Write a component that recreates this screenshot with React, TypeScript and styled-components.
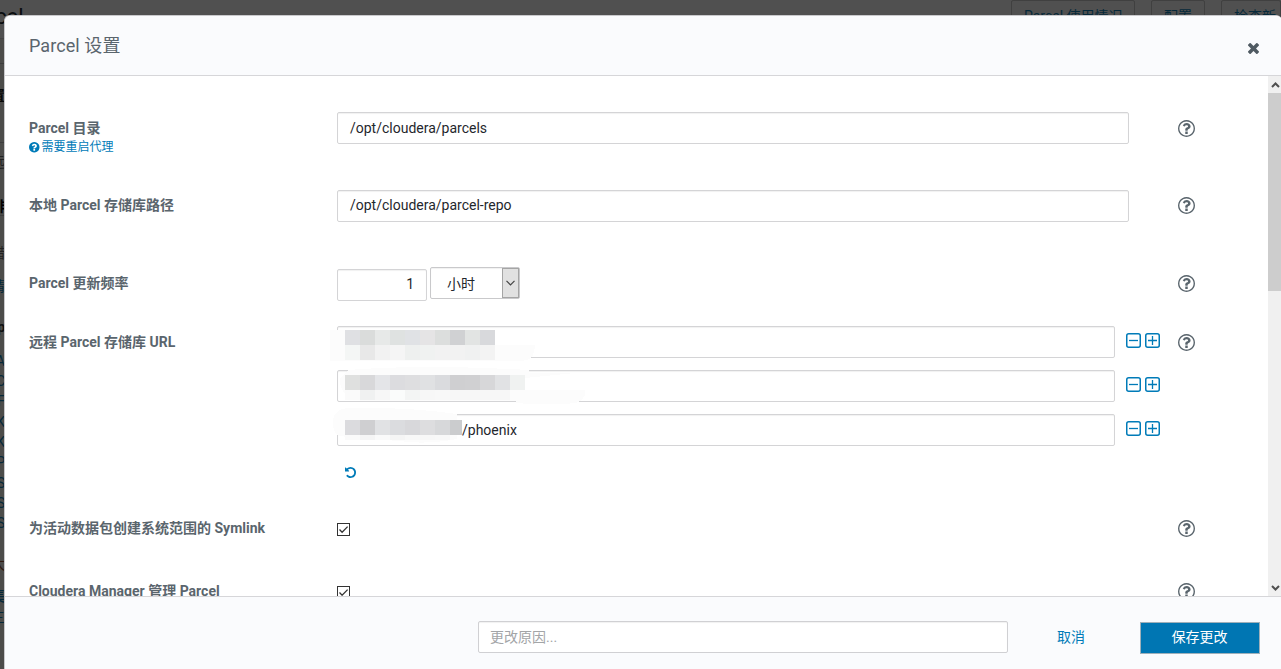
import React from "react";
import styled, { createGlobalStyle } from "styled-components";

const FONT = `Roboto, "Noto Sans CJK SC", sans-serif`;
const BLUE = "#007bb8";
const GREY = "#5a656d";

const Global = createGlobalStyle`
  * { box-sizing: border-box; }
  html, body { margin: 0; height: 100%; overflow: hidden; }
  body { font-family: ${FONT}; font-size: 14px; color: #1f272d; }
  button, input { font-family: inherit; }
`;

const Page = styled.div`
  position: relative;
  width: 1281px;
  height: 669px;
  overflow: hidden;
  background: #505050;
`;

/* dimmed page under the dialog */
const PageHeader = styled.div`
  display: flex;
  justify-content: flex-end;
  gap: 16px;
  height: 39px;
  border-bottom: 1px solid #454545;
`;
const PageTitle = styled.div`
  margin: 4px auto 0 -5px;
  font-size: 22px;
  line-height: 26px;
  color: #0a0d0f;
`;
const PageButton = styled.div<{ $w: number }>`
  flex: none;
  width: ${(p) => p.$w}px;
  height: 32px;
  padding-left: 12px;
  border: 1px solid #404040;
  border-radius: 2px;
  line-height: 30px;
  color: #06293a;
  white-space: nowrap;
`;
const PageBody = styled.div`
  display: flex;
  flex-direction: column;
  width: 5px;
  height: 630px;
  background: #4c4c4a;
`;
const PageLine = styled.div<{ $gap: number; $tone?: string; $bold?: boolean; $rule?: boolean }>`
  flex: none;
  display: flex;
  justify-content: flex-end;
  width: 5px;
  height: 20px;
  margin-top: ${(p) => p.$gap}px;
  border-bottom: ${(p) => (p.$rule ? "1px solid #3d3d3d" : "0")};
  line-height: 20px;
  font-weight: ${(p) => (p.$bold ? 700 : 400)};
  color: ${(p) => p.$tone || "#06293a"};
`;

const Dialog = styled.div`
  position: absolute;
  left: 4px;
  top: 15px;
  width: 1278px;
  height: 654px;
  display: flex;
  flex-direction: column;
  border: 1px solid #c9c9cc;
  border-right: 0;
  border-bottom: 0;
  border-radius: 6px 6px 0 0;
  background: #fff;
  overflow: hidden;
`;
const Header = styled.header`
  flex: none;
  display: flex;
  align-items: center;
  justify-content: space-between;
  height: 60px;
  padding: 0 23px 0 24px;
  border-bottom: 1px solid #d6d6d9;
  background: #fafbfd;
`;
const Title = styled.h1`
  margin: 0;
  font-size: 18px;
  font-weight: 400;
  line-height: 24px;
  letter-spacing: 0.08px;
  color: ${GREY};
`;
const CloseButton = styled.button`
  display: flex;
  padding: 0;
  margin-top: 6px;
  border: 0;
  background: none;
  color: #4f5a62;
`;
const Middle = styled.div`
  flex: none;
  display: flex;
  height: 520px;
`;
const Form = styled.div`
  flex: none;
  width: 1263px;
  padding: 36px 0 0 24px;
  overflow: hidden;
`;
const ScrollTrack = styled.div`
  flex: 1;
  display: flex;
  flex-direction: column;
  background: #f0f0f0;
`;
const ScrollArrow = styled.div`
  display: flex;
  justify-content: center;
  align-items: center;
  height: 17px;
`;
const ScrollThumb = styled.div`
  height: 198px;
  margin-bottom: auto;
  background: #cdcdcd;
`;

const Row = styled.div<{ $h: number }>`
  display: flex;
  height: ${(p) => p.$h}px;
`;
const LabelCell = styled.div<{ $lift?: boolean }>`
  flex: none;
  width: 308px;
  padding-top: ${(p) => (p.$lift ? 5 : 6)}px;
`;
const Label = styled.div`
  font-weight: 700;
  line-height: 20px;
  color: ${GREY};
`;
const Note = styled.div`
  display: flex;
  align-items: center;
  gap: 2px;
  font-size: 12px;
  line-height: 19px;
  color: ${BLUE};
`;
const Field = styled.div`
  flex: none;
  width: 841px;
`;
const HelpCell = styled.div<{ $lift?: boolean }>`
  padding-top: ${(p) => (p.$lift ? 7 : 8)}px;
  color: ${GREY};
`;
const Box = styled.div<{ $w: number; $indent?: number; $end?: boolean; $lift?: boolean }>`
  flex: none;
  width: ${(p) => p.$w}px;
  height: 32px;
  padding: 0 12px 0 ${(p) => p.$indent || 12}px;
  border: 1px solid #d4d4d6;
  border-radius: 2px;
  background: #fff;
  box-shadow: inset 0 1px 1px rgba(0, 0, 0, 0.06);
  line-height: ${(p) => (p.$lift ? 28 : 30)}px;
  text-align: ${(p) => (p.$end ? "right" : "left")};
`;
const Frequency = styled.div`
  display: flex;
  gap: 3px;
`;
const NumberWrap = styled.div`
  padding-top: 2px;
`;
const Select = styled.div`
  display: flex;
  justify-content: space-between;
  width: 90px;
  height: 32px;
  border: 1px solid #c9c9cb;
  border-radius: 2px;
  padding-left: 16px;
  line-height: 32px;
  box-shadow: inset 0 1px 1px rgba(0, 0, 0, 0.06);
`;
const SelectArrow = styled.div`
  display: flex;
  align-items: center;
  justify-content: center;
  width: 17px;
  border: 1px solid #a5a5a5;
  background: #e1e1e1;
`;
const UrlList = styled.div`
  display: flex;
  flex-direction: column;
  gap: 12px;
`;
const UrlRow = styled.div`
  position: relative;
  display: flex;
  align-items: flex-start;
`;
const Actions = styled.div`
  display: flex;
  gap: 4px;
  padding: 7px 0 0 11px;
  color: ${BLUE};
`;
const Mask = styled.svg`
  position: absolute;
  left: -7px;
  top: -8px;
`;
const Undo = styled.div`
  display: flex;
  padding: 21px 0 0 8px;
  color: ${BLUE};
`;
const Check = styled.div`
  display: flex;
  align-items: center;
  justify-content: center;
  width: 13px;
  height: 13px;
  margin-top: 11px;
  border: 1px solid #333;
  background: #fff;
`;
const Footer = styled.footer`
  flex: 1;
  display: flex;
  align-items: flex-start;
  padding: 24px 0 0 473px;
  border-top: 1px solid #d6d6d9;
  background: #fafbfd;
`;
const Reason = styled.input`
  width: 530px;
  height: 32px;
  padding: 0 11px;
  border: 1px solid #d0d0d3;
  border-radius: 2px;
  background: #fff;
  font-size: 14px;
  box-shadow: inset 0 1px 1px rgba(0, 0, 0, 0.06);
  &::placeholder { color: #a3a5a7; opacity: 1; }
`;
const Cancel = styled.button`
  width: 132px;
  height: 32px;
  padding: 0 6px 2px 0;
  border: 0;
  background: none;
  font-size: 14px;
  color: ${BLUE};
`;
const Save = styled.button`
  width: 120px;
  height: 32px;
  margin-top: 1px;
  padding: 0 1px 4px 0;
  border: 1px solid #9fb0ba;
  background: #0076b3;
  font-size: 14px;
  color: #fff;
`;

const paths = {
  times:
    "M1490 1322q0 40-28 68l-136 136q-28 28-68 28t-68-28l-294-294-294 294q-28 28-68 28t-68-28l-136-136q-28-28-28-68t28-68l294-294-294-294q-28-28-28-68t28-68l136-136q28-28 68-28t68 28l294 294 294-294q28-28 68-28t68 28l136 136q28 28 28 68t-28 68l-294 294 294 294q28 28 28 68z",
  help:
    "M1024 1376v-192q0-14-9-23t-23-9h-192q-14 0-23 9t-9 23v192q0 14 9 23t23 9h192q14 0 23-9t9-23zm256-672q0-88-55.5-163t-138.5-116-170-41q-243 0-371 213-15 24 8 42l132 100q7 6 19 6 16 0 25-12 53-68 86-92 34-24 86-24 48 0 85.5 26t37.5 59q0 38-20 61t-68 45q-63 28-115.5 86.5t-52.5 125.5v36q0 14 9 23t23 9h192q14 0 23-9t9-23q0-19 21.5-49.5t54.5-49.5q32-18 49-28.5t46-35 44.5-48 28-60.5 12.5-81zm384 192q0 209-103 385.5t-279.5 279.5-385.5 103-385.5-103-279.5-279.5-103-385.5 103-385.5 279.5-279.5 385.5-103 385.5 103 279.5 279.5 103 385.5z",
  helpOutline:
    "M1008 1200v160q0 14-9 23t-23 9h-160q-14 0-23-9t-9-23v-160q0-14 9-23t23-9h160q14 0 23 9t9 23zm256-496q0 50-15 90t-45.5 69-52 44-59.5 36q-32 18-46.5 28t-26 24-11.5 29v32q0 14-9 23t-23 9h-160q-14 0-23-9t-9-23v-68q0-35 10.5-64.5t24-47.5 39-35.5 41-25.5 44.5-21q53-25 75-43t22-49q0-42-43.5-71.5t-95.5-29.5q-56 0-95 27-29 20-80 83-9 12-25 12-11 0-19-6l-108-82q-10-7-12-20t5-23q122-192 349-192 129 0 238.5 89.5t109.5 214.5zm-368-448q-130 0-248.5 51t-204 136.5-136.5 204-51 248.5 51 248.5 136.5 204 204 136.5 248.5 51 248.5-51 204-136.5 136.5-204 51-248.5-51-248.5-136.5-204-204-136.5-248.5-51zm768 640q0 209-103 385.5t-279.5 279.5-385.5 103-385.5-103-279.5-279.5-103-385.5 103-385.5 279.5-279.5 385.5-103 385.5 103 279.5 279.5 103 385.5z",
  undo:
    "M1664 896q0 156-61 298t-164 245-245 164-298 61q-172 0-327-72.5t-264-204.5q-7-10-6.5-22.5t8.5-20.5l137-138q10-9 25-9 16 2 23 12 73 95 179 147t225 52q104 0 198.5-40.5t163.5-109.5 109.5-163.5 40.5-198.5-40.5-198.5-109.5-163.5-163.5-109.5-198.5-40.5q-98 0-188 35.5t-160 101.5l137 138q31 30 14 69-17 40-59 40h-448q-26 0-45-19t-19-45v-448q0-42 40-59 39-17 69 14l130 129q107-101 244.5-156.5t284.5-55.5q156 0 298 61t245 164 164 245 61 298z",
};

/* glyphs share a 1792 grid; the view box is trimmed to the ink */
const Glyph = ({ name, size }: { name: keyof typeof paths; size: number }) => (
  <svg
    width={size}
    height={size}
    viewBox={name === "times" ? "302 366 1188 1188" : "128 128 1536 1536"}
    fill="currentColor"
    style={{ display: "block" }}
  >
    <path d={paths[name]} />
  </svg>
);

const SquareIcon = ({ plus }: { plus?: boolean }) => (
  <svg width="15" height="15" viewBox="0 0 15 15" fill="none" stroke="currentColor">
    <rect x="0.75" y="0.75" width="13.5" height="13.5" rx="2" strokeWidth="1.5" />
    <path d={plus ? "M3 7.5h9M7.5 3v9" : "M3 7.5h9"} strokeWidth="1.3" />
  </svg>
);

const Help = ({ lift }: { lift?: boolean }) => (
  <HelpCell $lift={lift}>
    <Glyph name="helpOutline" size={17} />
  </HelpCell>
);

const Checkbox = () => (
  <Check>
    <svg width="11" height="11" viewBox="0 0 11 11" fill="none" stroke="#333" strokeWidth="1.3">
      <path d="M1.5 5.5l2.6 2.7L9.6 2.6" />
    </svg>
  </Check>
);

type MaskData = { smear: string; top: number; cells: string[]; lower: string[]; last?: number; lowerH: number };

/* pixelated cover over the host part of each address */
const masks: MaskData[] = [
  {
    smear: "M0 12H165V27H205Q204 38 200 41L192 43H0Z",
    top: 12,
    cells: ["#dfe0e3", "#dadcdb", "#e7e9e8", "#dfe2e1", "#e0e2e5", "#e5e4e5", "#dcdedd", "#d0d1d3", "#e2e4e3", "#d8d9dc"],
    lower: ["#f4f6f5", "#e8e8e8", "#f2f2f2", "#f5f5f5", "#eef0ef", "#f0f2f1", "#f2f2f2", "#f2f2f2", "#f0f1f1", "#f3f3f3"],
    lowerH: 15,
  },
  {
    smear: "M18 8Q90 2 199 8V11H245L195 16V28H255Q256 38 246 41Q220 44 186 41V39L60 39H32Q8 34 10 16Z",
    top: 13,
    cells: ["#dfe0df", "#d8d8da", "#e4e5e8", "#dcdcdf", "#dedee0", "#e0e1e3", "#dadbde", "#cfcfd1", "#d0d0d2", "#d7d7d9", "#e1e2e4", "#f0f2f1"],
    lower: ["#fafafa", "#f0f1f1", "#f7f7f7", "#fafcfb", "#f3f5f4", "#f7f7f7", "#f8f8f8", "#f7f7f7", "#f7f7f7", "#f7f7f7", "#f7f7f7"],
    lowerH: 10,
  },
  {
    smear: "M20 2Q80 1 127 8V33Q100 38 80 36L8 30Q2 24 3 14Q5 2 20 2Z",
    top: 14,
    cells: ["#dbdbde", "#cfcfd1", "#e1e2e4", "#dbdcdf", "#d8d8db", "#dddddf", "#d7d8da", "#cbccce"],
    lower: ["#fafafa", "#f5f5f5", "#fafafa", "#f5f5f5", "#f8f8f8", "#f7f7f7", "#f8f8f8"],
    last: 12,
    lowerH: 5,
  },
];

const AddressMask = ({ data }: { data: MaskData }) => (
  <Mask width="260" height="46" viewBox="0 0 260 46" shapeRendering="crispEdges">
    <path d={data.smear} fill="#fcfcfc" />
    {data.cells.map((c, i) => (
      <rect key={i} x={15 + i * 15} y={data.top} width={i === 7 && data.last ? data.last : 15} height="15" fill={c} />
    ))}
    {data.lower.map((c, i) => (
      <rect key={i} x={15 + i * 15} y={data.top + 15} width="15" height={data.lowerH} fill={c} />
    ))}
  </Mask>
);

const backLines: { t: string; gap: number; tone?: string; bold?: boolean; rule?: boolean }[] = [
  { t: "", gap: 5, tone: "#000", rule: true },
  { t: "置", gap: 21, tone: "#080808", bold: true },
  { t: "", gap: 18, rule: true },
  { t: "远", gap: 9, tone: "#222" },
  { t: "排", gap: 24, tone: "#000", bold: true, rule: true },
  { t: "错", gap: 27, tone: "#222" },
  { t: "请", gap: 13 },
  { t: "p", gap: 21, tone: "#111", bold: true },
  { t: "A", gap: 14 },
  { t: "C", gap: 0 },
  { t: "F", gap: 0 },
  { t: "K", gap: 1 },
  { t: "K", gap: 0 },
  { t: "P", gap: 0 },
  { t: "S", gap: 1 },
  { t: "S", gap: 0 },
  { t: "S", gap: 0 },
  { t: "太", gap: 21, tone: "#301a10" },
  { t: "集", gap: 12, bold: true },
  { t: "三", gap: 1 },
];

export default function App() {
  return (
    <>
      <Global />
      <Page>
        <PageHeader>
          <PageTitle>cel</PageTitle>
          <PageButton $w={124}>Parcel 使用情况</PageButton>
          <PageButton $w={54}>配置</PageButton>
          <PageButton $w={60}>检查新</PageButton>
        </PageHeader>
        <PageBody>
          {backLines.map((l, i) => (
            <PageLine key={i} $gap={l.gap} $tone={l.tone} $bold={l.bold} $rule={l.rule}>
              {l.t}
            </PageLine>
          ))}
        </PageBody>

        <Dialog>
          <Header>
            <Title>Parcel 设置</Title>
            <CloseButton aria-label="关闭">
              <Glyph name="times" size={11} />
            </CloseButton>
          </Header>
          <Middle>
            <Form>
              <Row $h={78}>
                <LabelCell>
                  <Label>Parcel 目录</Label>
                  <Note>
                    <Glyph name="help" size={10.5} />
                    需要重启代理
                  </Note>
                </LabelCell>
                <Field>
                  <Box $w={792}>/opt/cloudera/parcels</Box>
                </Field>
                <Help />
              </Row>
              <Row $h={77}>
                <LabelCell $lift>
                  <Label>本地 Parcel 存储库路径</Label>
                </LabelCell>
                <Field>
                  <Box $w={792} $lift>/opt/cloudera/parcel-repo</Box>
                </Field>
                <Help lift />
              </Row>
              <Row $h={59}>
                <LabelCell>
                  <Label>Parcel 更新频率</Label>
                </LabelCell>
                <Field>
                  <Frequency>
                    <NumberWrap>
                      <Box $w={90} $end $lift>1</Box>
                    </NumberWrap>
                    <Select>
                      小时
                      <SelectArrow>
                        <svg width="9" height="6" viewBox="0 0 9 6" fill="none" stroke="#444" strokeWidth="1.2">
                          <path d="M0.5 0.8L4.5 4.8L8.5 0.8" />
                        </svg>
                      </SelectArrow>
                    </Select>
                  </Frequency>
                </Field>
                <Help />
              </Row>
              <Row $h={186}>
                <LabelCell>
                  <Label>远程 Parcel 存储库 URL</Label>
                </LabelCell>
                <Field>
                  <UrlList>
                    {masks.map((m, i) => (
                      <UrlRow key={i}>
                        <Box $w={778} $indent={124}>{i === 2 ? "/phoenix" : ""}</Box>
                        <AddressMask data={m} />
                        <Actions>
                          <SquareIcon />
                          <SquareIcon plus />
                        </Actions>
                      </UrlRow>
                    ))}
                  </UrlList>
                  <Undo>
                    <Glyph name="undo" size={11} />
                  </Undo>
                </Field>
                <Help />
              </Row>
              <Row $h={63}>
                <LabelCell>
                  <Label>为活动数据包创建系统范围的 Symlink</Label>
                </LabelCell>
                <Field>
                  <Checkbox />
                </Field>
                <Help />
              </Row>
              <Row $h={63}>
                <LabelCell>
                  <Label>Cloudera Manager 管理 Parcel</Label>
                </LabelCell>
                <Field>
                  <Checkbox />
                </Field>
                <Help />
              </Row>
            </Form>
            <ScrollTrack>
              <ScrollArrow>
                <svg width="9" height="6" viewBox="0 0 9 6" fill="none" stroke="#505050" strokeWidth="2">
                  <path d="M1 5L4.5 1.5L8 5" />
                </svg>
              </ScrollArrow>
              <ScrollThumb />
              <ScrollArrow>
                <svg width="9" height="6" viewBox="0 0 9 6" fill="none" stroke="#505050" strokeWidth="2">
                  <path d="M1 1L4.5 4.5L8 1" />
                </svg>
              </ScrollArrow>
            </ScrollTrack>
          </Middle>
          <Footer>
            <Reason placeholder="更改原因..." />
            <Cancel>取消</Cancel>
            <Save>保存更改</Save>
          </Footer>
        </Dialog>
      </Page>
    </>
  );
}
